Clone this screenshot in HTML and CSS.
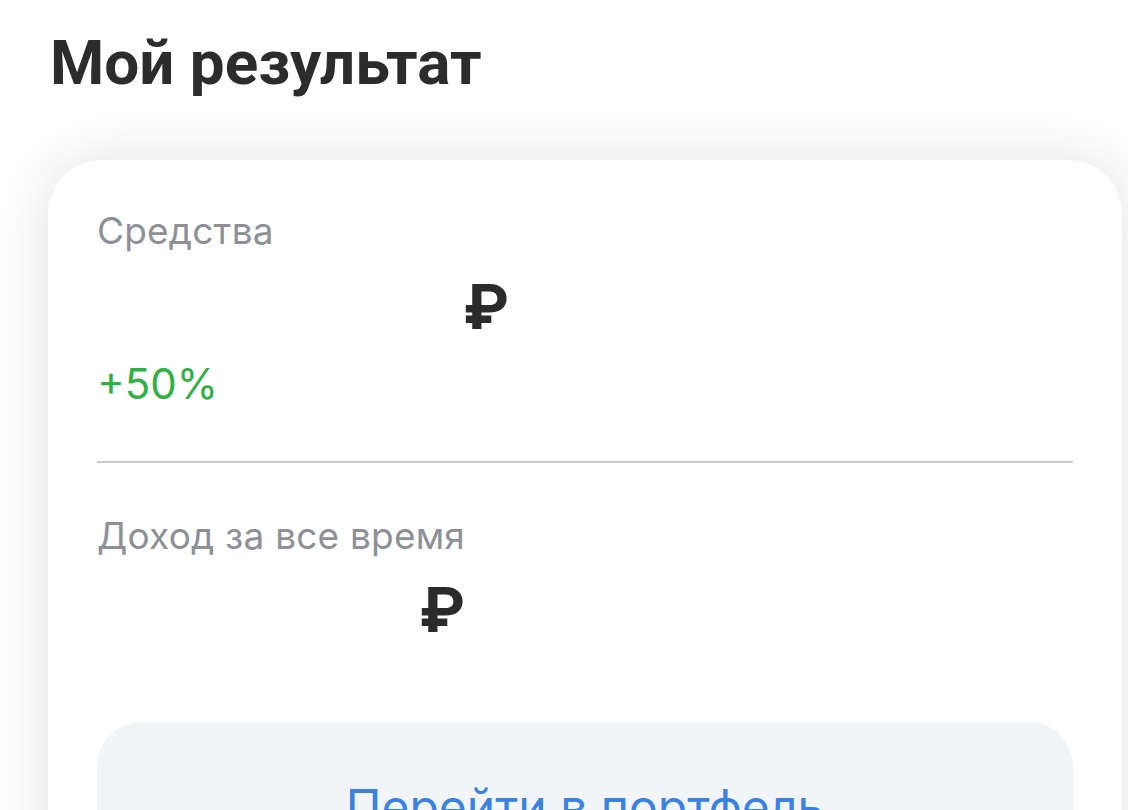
FILE: index.html
```html
<!DOCTYPE html>
<html lang="ru">
<head>
<meta charset="utf-8">
<title>Мой результат</title>
<link rel="stylesheet" href="styles.css">
</head>
<body>
<main class="page">
  <h1 class="title">Мой результат</h1>
  <section class="card">
    <div class="label">Средства</div>
    <div class="amount amount-main"><span class="mask mask-main"></span><span class="rub">₽</span></div>
    <div class="change">+50%</div>
    <hr class="divider">
    <div class="label">Доход за все время</div>
    <div class="amount amount-income"><span class="mask mask-income"></span><span class="rub">₽</span></div>
    <button class="portfolio-btn" type="button">Перейти в портфель</button>
  </section>
</main>
</body>
</html>
```
FILE: styles.css
```css
html, body {
  margin: 0;
  padding: 0;
  background: #ffffff;
  overflow: hidden;
}
.page {
  display: flex;
  flex-direction: column;
  padding-top: 27px;
}
.title {
  margin: 0 0 61px 50px;
  font-family: Roboto, "Liberation Sans", sans-serif;
  font-weight: 700;
  font-size: 62px;
  line-height: 72px;
  color: #2c2c2c;
  letter-spacing: 0;
}
.card {
  margin-left: 48px;
  width: 1074px;
  box-sizing: border-box;
  padding: 49px 49px 60px 49px;
  background: #ffffff;
  border-radius: 54px;
  box-shadow: 0 0 60px rgba(0, 0, 0, 0.12);
  display: flex;
  flex-direction: column;
  font-family: Inter, "Noto Sans", sans-serif;
}
.label {
  font-size: 37px;
  line-height: 44px;
  color: #8d9096;
  letter-spacing: 0.2px;
}
.amount {
  display: flex;
  align-items: baseline;
  font-weight: 700;
  font-size: 62px;
  line-height: 72px;
  color: #2b2b2b;
}
.amount-main {
  margin-top: 18px;
}
.amount-income {
  margin-top: 16px;
}
.mask {
  display: inline-block;
  height: 1px;
}
.mask-main {
  width: 366px;
}
.mask-income {
  width: 322px;
}
.change {
  margin-top: 17px;
  font-size: 42px;
  line-height: 48px;
  color: #2fb145;
}
.divider {
  margin: 53px 0 51px 0;
  border: 0;
  height: 2px;
  background: #c9c9cc;
}
.portfolio-btn {
  display: block;
  margin-top: 76px;
  padding: 56px 0 56px 0;
  border: 0;
  border-radius: 44px;
  background: #f1f5f7;
  color: #3b82e0;
  font-family: Inter, "Noto Sans", sans-serif;
  font-size: 48px;
  line-height: 58px;
  cursor: pointer;
}
```
